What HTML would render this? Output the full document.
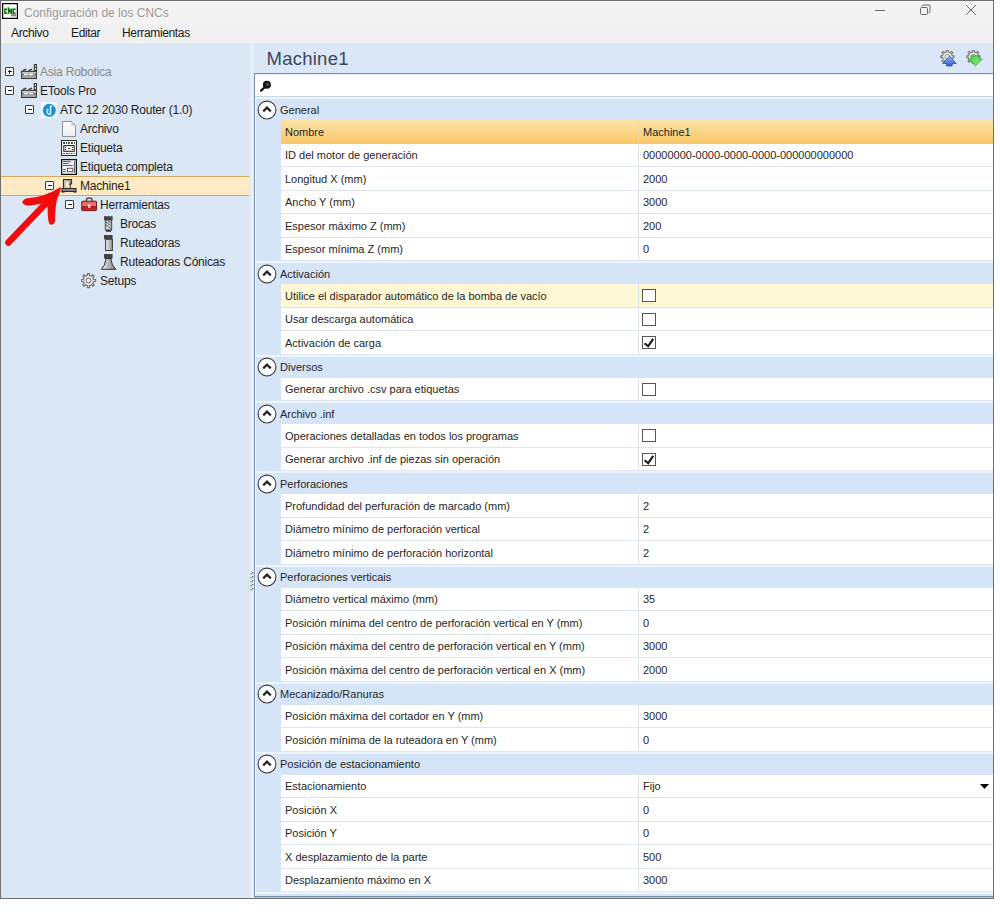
<!DOCTYPE html>
<html><head><meta charset="utf-8">
<style>
*{box-sizing:border-box}
html,body{margin:0;padding:0;width:1000px;height:915px;overflow:hidden;background:#fff;font-family:"Liberation Sans",sans-serif}
#win{position:absolute;left:0;top:0;width:994px;height:899px;border:1px solid #6f6f6f;background:#f0f0f0;overflow:hidden}
#title{position:absolute;left:0;top:0;width:992px;height:23px;background:#f3f3f3}
#title .t{position:absolute;left:23px;top:5px;font-size:12px;color:#9a9a9a;white-space:nowrap}
#menu{position:absolute;left:0;top:23px;width:992px;height:19px;background:#f0f0f0;font-size:12px;color:#1a1a1a;letter-spacing:-0.35px;box-shadow:inset 0 -1px 0 #f5f6f8}
#menu span{position:absolute;top:2px;white-space:nowrap}
#left{position:absolute;left:0;top:42px;width:249px;height:856px;background:#dce7f5}
#split{position:absolute;left:249px;top:42px;width:4px;height:856px;background:#e6edf8}
#right{position:absolute;left:253px;top:42px;width:739px;height:856px;background:#dbe7f6}
.eb{position:absolute;width:9px;height:9px;border:1px solid #333c48;background:#fff;border-radius:1px}
.eb .h{position:absolute;left:1.5px;top:3px;width:4px;height:1.2px;background:#222}
.eb .v{position:absolute;left:3px;top:1.5px;width:1.2px;height:4px;background:#222}
.ic{position:absolute;width:16px;height:16px}
.ic svg{display:block}
.tt{position:absolute;font-size:12px;line-height:18px;white-space:nowrap;letter-spacing:-0.2px}
#selrow{position:absolute;left:1px;top:176px;width:248px;height:20px;background:#fde9c4;border-top:1px solid #d8a85c;border-bottom:1px solid #d8a85c}
#grid{position:absolute;left:254px;top:73px;width:739px;height:824px;border:1px solid #7a8fa8;border-right:none;background:#d5e4f7;box-shadow:inset 1px 0 0 #eef6fd}
#search{position:absolute;left:255px;top:74px;width:738px;height:23px;background:#fff;border-bottom:1px solid #c9d6e6;box-shadow:inset 0 1px 0 #e4ebf6}
.gh{position:absolute;left:256px;width:737px;background:#d5e4f7}
.gh .ghb{position:absolute;left:0;right:0;top:0;height:2px;background:#ecf5fc}
.gh .circ{position:absolute;left:0.5px;top:2.6px;width:20px;height:20px}
.gh .circ svg{display:block}
.ght{position:absolute;left:24px;top:6.5px;font-size:11px;color:#262626;white-space:nowrap}
.row{position:absolute;left:281px;width:712px;background:#fff;border-bottom:1px solid #dfe5ee}
.row.sel{background:linear-gradient(#fde3a8,#f8c86a);border-bottom-color:#f8c86a}
.row.hov .nt{}
.row.hov::before{content:"";position:absolute;left:0;top:0;width:357px;bottom:0;background:#fef7d6}
.row.hov .vc{background:#fef7d6}
.nt{position:absolute;left:4px;top:5.6px;font-size:11px;color:#262626;white-space:nowrap}
.vc{position:absolute;left:357px;top:0;right:0;bottom:0;border-left:1px solid #dde4ee}
.row.sel .vc{border-left-color:#f4d7a0}
.vt{position:absolute;left:4px;top:5.6px;font-size:11px;color:#262626;white-space:nowrap}
.cb{position:absolute;left:3px;top:5px;width:14px;height:13px;border:1px solid #555;background:#fff}
.cb svg{position:absolute;left:-1px;top:-1px}
.dd{position:absolute;right:4px;top:9px}
#arrow{position:absolute;left:0;top:0}
</style></head><body>
<div id="win">
<div id="title">
 <svg style="position:absolute;left:1px;top:2px" width="16" height="16" viewBox="0 0 16 16"><rect x="0.6" y="0.6" width="14.8" height="14.8" fill="#fff" stroke="#000" stroke-width="1.25"/><rect x="2" y="3.5" width="12" height="7" fill="#e9f5e9"/><path d="M5.2 6.2 H2.9 V10.2 H5.2 M6.6 10.8 V5.8 L9.3 10.2 V5.6 M13.6 6.2 H11.2 V10.2 H13.6" fill="none" stroke="#0a700a" stroke-width="1.5"/><rect x="9" y="11.2" width="5" height="2.2" fill="#8a8a8a"/></svg>
 <span class="t">Configuración de los CNCs</span>
 <svg style="position:absolute;left:873px;top:3px" width="104" height="12" viewBox="0 0 104 12">
  <path d="M1 6.5 H11" stroke="#6a6a6a" stroke-width="1"/>
  <rect x="46.5" y="3.5" width="7" height="7" rx="1.2" fill="none" stroke="#6a6a6a" stroke-width="1"/>
  <path d="M48.5 2.5 V2 Q48.5 1 49.5 1 H55 Q56 1 56 2 V7.5 Q56 8.5 55 8.5 H54.5" fill="none" stroke="#6a6a6a" stroke-width="1"/>
  <path d="M92 1 L102 11 M102 1 L92 11" stroke="#6a6a6a" stroke-width="1"/>
 </svg>
</div>
<div id="menu"><span style="left:10px">Archivo</span><span style="left:70px">Editar</span><span style="left:121px">Herramientas</span></div>
<div id="left"></div>
<div id="split"></div>
<div id="right"></div>
</div>
<div id="selrow"></div>
<div class="eb" style="left:5px;top:67px"><span class="h"></span><span class="v"></span></div><div class="ic" style="left:21px;top:64px"><svg width="16" height="16" viewBox="0 0 16 16"><rect x="0.6" y="7.3" width="14.8" height="7.2" fill="#8d8d8d" stroke="#3a3a3a" stroke-width="1.1"/><rect x="1.2" y="8" width="13.6" height="1.6" fill="#c9c9c9"/><rect x="12.8" y="-0.2" width="3.2" height="7.8" fill="#3a3a3a"/><rect x="13.9" y="1.2" width="1.1" height="1.6" fill="#eee"/><rect x="13.9" y="4" width="1.1" height="2" fill="#eee"/><path d="M1.8 6.7 L5.2 5.1 M7.6 6.7 L11 5.1" stroke="#3a3a3a" stroke-width="1.3"/><rect x="3" y="9.8" width="3.8" height="1.4" fill="#fafafa"/><rect x="8" y="9.8" width="3.8" height="1.4" fill="#fafafa"/><rect x="1.2" y="11.8" width="13.6" height="2" fill="#a8a8a8"/></svg></div><div class="tt" style="left:40px;top:63px;color:#8a8a8a">Asia Robotica</div><div class="eb" style="left:5px;top:86px"><span class="h"></span></div><div class="ic" style="left:21px;top:83px"><svg width="16" height="16" viewBox="0 0 16 16"><rect x="0.6" y="7.3" width="14.8" height="7.2" fill="#8d8d8d" stroke="#3a3a3a" stroke-width="1.1"/><rect x="1.2" y="8" width="13.6" height="1.6" fill="#c9c9c9"/><rect x="12.8" y="-0.2" width="3.2" height="7.8" fill="#3a3a3a"/><rect x="13.9" y="1.2" width="1.1" height="1.6" fill="#eee"/><rect x="13.9" y="4" width="1.1" height="2" fill="#eee"/><path d="M1.8 6.7 L5.2 5.1 M7.6 6.7 L11 5.1" stroke="#3a3a3a" stroke-width="1.3"/><rect x="3" y="9.8" width="3.8" height="1.4" fill="#fafafa"/><rect x="8" y="9.8" width="3.8" height="1.4" fill="#fafafa"/><rect x="1.2" y="11.8" width="13.6" height="2" fill="#a8a8a8"/></svg></div><div class="tt" style="left:40px;top:82px;color:#1e1e1e">ETools Pro</div><div class="eb" style="left:25px;top:105px"><span class="h"></span></div><div class="ic" style="left:41px;top:102px"><svg width="16" height="16" viewBox="0 0 16 16"><rect width="16" height="16" fill="#eef7fc"/><circle cx="8.3" cy="8.3" r="6.5" fill="#1f8fcf"/><path d="M9.5 3.8 V12.2 H7.2 M9.5 4.2 H11.2 M7.3 7.2 Q5.5 8 6.5 9.5 Q6 11 7 12" fill="none" stroke="#c9f4ff" stroke-width="1.5"/></svg></div><div class="tt" style="left:60px;top:101px;color:#1e1e1e">ATC 12 2030 Router (1.0)</div><div class="ic" style="left:61px;top:121px"><svg width="16" height="16" viewBox="0 0 16 16"><defs><linearGradient id="dg" x1="0" y1="0" x2="0" y2="1"><stop offset="0" stop-color="#fff"/><stop offset="1" stop-color="#ececec"/></linearGradient></defs><path d="M1.5 0.5 H10.3 L14.5 4.7 V15.5 H1.5 Z" fill="url(#dg)" stroke="#8c9199" stroke-width="1"/><path d="M10.3 0.8 V4.7 H14.2 Z" fill="#c8c8c8"/></svg></div><div class="tt" style="left:80px;top:120px;color:#1e1e1e">Archivo</div><div class="ic" style="left:61px;top:140px"><svg width="16" height="16" viewBox="0 0 16 16"><rect x="0.5" y="0.5" width="15" height="15" fill="#fafafa" stroke="#2a2a2a" stroke-width="1.1"/><g fill="#1e1e1e"><rect x="2.2" y="2.1" width="1.8" height="1.8"/><rect x="5" y="2.1" width="1" height="1.8"/><rect x="7" y="2.1" width="1.7" height="1.8"/><rect x="10" y="2.1" width="1.8" height="1.8"/><rect x="13" y="2.1" width="0.9" height="1.8"/></g><rect x="2.8" y="5.6" width="10.4" height="5.7" fill="#fff" stroke="#2a2a2a" stroke-width="1.1"/><g fill="#333"><circle cx="4.6" cy="7.4" r="0.6"/><circle cx="4.6" cy="9.4" r="0.6"/><circle cx="11.4" cy="7.4" r="0.6"/><circle cx="11.4" cy="9.4" r="0.6"/><rect x="7" y="8.1" width="2" height="0.9"/></g><g fill="#6a3a3a"><rect x="2.2" y="13" width="1.8" height="1"/><rect x="5" y="13" width="1.8" height="1"/><rect x="7.6" y="13" width="1" height="1"/><rect x="9.6" y="13" width="1.8" height="1"/><rect x="12.6" y="13" width="1" height="1"/></g></svg></div><div class="tt" style="left:80px;top:139px;color:#1e1e1e">Etiqueta</div><div class="ic" style="left:61px;top:159px"><svg width="16" height="16" viewBox="0 0 16 16"><rect x="0.6" y="0.6" width="14.8" height="14.8" fill="#f3f6fa" stroke="#111" stroke-width="1.3"/><g fill="#5a5d63"><rect x="2" y="2.1" width="7.8" height="1"/><rect x="2" y="4" width="5.7" height="1"/><rect x="2" y="6" width="9.8" height="1"/><rect x="2" y="10" width="2.8" height="1"/><rect x="2" y="12" width="2.8" height="1"/><rect x="13" y="2" width="1" height="11.7"/></g><rect x="6.5" y="9.3" width="5.3" height="3.4" fill="#fff" stroke="#5a5d63" stroke-width="1"/></svg></div><div class="tt" style="left:80px;top:158px;color:#1e1e1e">Etiqueta completa</div><div class="eb" style="left:45px;top:181px"><span class="h"></span></div><div class="ic" style="left:61px;top:178px"><svg width="16" height="16" viewBox="0 0 16 16"><path d="M2.5 10.5 V1.5 H10.5 V6" fill="none" stroke="#2e2e2e" stroke-width="1.2"/><rect x="3.1" y="2.1" width="1.8" height="8.2" fill="#bdbdbd"/><rect x="5" y="2.1" width="5" height="1.4" fill="#9a9a9a"/><rect x="8" y="2.1" width="2" height="4" fill="#9a9a9a"/><rect x="7.7" y="5.6" width="3" height="0.9" fill="#2e2e2e"/><rect x="8.7" y="6" width="1" height="4" fill="#2e2e2e"/><rect x="1" y="10.5" width="14" height="3" fill="#8a8a8a" stroke="#2e2e2e" stroke-width="1.1"/><rect x="0.8" y="13" width="2.6" height="1.6" fill="#2e2e2e"/><rect x="12.6" y="13" width="2.6" height="1.6" fill="#2e2e2e"/></svg></div><div class="tt" style="left:80px;top:177px;color:#1e1e1e">Machine1</div><div class="eb" style="left:65px;top:200px"><span class="h"></span></div><div class="ic" style="left:81px;top:197px"><svg width="16" height="16" viewBox="0 0 16 16"><defs><linearGradient id="tg" x1="0" y1="0" x2="0" y2="1"><stop offset="0" stop-color="#e05a55"/><stop offset="0.45" stop-color="#f07a70"/><stop offset="0.55" stop-color="#b81818"/><stop offset="1" stop-color="#d02a2a"/></linearGradient></defs><path d="M5.5 4 V2.5 Q5.5 1.2 7 1.2 H9.5 Q11 1.2 11 2.5 V4" fill="none" stroke="#333" stroke-width="1.3"/><rect x="0.7" y="4.2" width="14.8" height="9.4" rx="0.8" fill="url(#tg)" stroke="#7a1a1a" stroke-width="1"/><rect x="7.2" y="7.5" width="2.2" height="3.2" fill="#fff2f2"/></svg></div><div class="tt" style="left:100px;top:196px;color:#1e1e1e">Herramientas</div><div class="ic" style="left:101px;top:216px"><svg width="16" height="16" viewBox="0 0 16 16"><rect x="3" y="0.2" width="8.6" height="3.9" fill="#454545"/><rect x="4.3" y="4" width="6.4" height="10" fill="#d0d0d0" stroke="#3a3a3a" stroke-width="0.9"/><path d="M4.6 5.5 L10.4 10 M4.6 8.5 L10.4 13 M6.5 4.2 L10.4 7.2" stroke="#555" stroke-width="0.9"/><rect x="5" y="14" width="5" height="1.8" fill="#3a3a3a"/></svg></div><div class="tt" style="left:120px;top:215px;color:#1e1e1e">Brocas</div><div class="ic" style="left:101px;top:235px"><svg width="16" height="16" viewBox="0 0 16 16"><rect x="3" y="0" width="8.6" height="4.3" fill="#454545"/><defs><linearGradient id="rg" x1="0" y1="0" x2="1" y2="0"><stop offset="0" stop-color="#f0f0f0"/><stop offset="1" stop-color="#909090"/></linearGradient></defs><rect x="4.6" y="4.3" width="6.8" height="11.2" fill="url(#rg)" stroke="#3a3a3a" stroke-width="1"/></svg></div><div class="tt" style="left:120px;top:234px;color:#1e1e1e">Ruteadoras</div><div class="ic" style="left:101px;top:254px"><svg width="16" height="16" viewBox="0 0 16 16"><rect x="3" y="0" width="8.6" height="4.5" fill="#454545"/><defs><linearGradient id="cg" x1="0" y1="0" x2="1" y2="0"><stop offset="0" stop-color="#f4f4f4"/><stop offset="1" stop-color="#7a7a7a"/></linearGradient></defs><path d="M4.6 4.5 H10.2 V6.5 Q10.5 11 14.8 15.3 H0.4 Q4.3 11 4.6 6.5 Z" fill="url(#cg)" stroke="#2e2e2e" stroke-width="1"/></svg></div><div class="tt" style="left:120px;top:253px;color:#1e1e1e">Ruteadoras Cónicas</div><div class="ic" style="left:81px;top:273px"><svg width="16" height="16" viewBox="0 0 16 16"><path d="M12.49 5.43 L12.82 6.55 L14.63 6.49 L14.63 8.51 L12.82 8.45 L12.49 9.57 L11.93 10.59 L13.26 11.82 L11.82 13.26 L10.59 11.93 L9.57 12.49 L8.45 12.82 L8.51 14.63 L6.49 14.63 L6.55 12.82 L5.43 12.49 L4.41 11.93 L3.18 13.26 L1.74 11.82 L3.07 10.59 L2.51 9.57 L2.18 8.45 L0.37 8.51 L0.37 6.49 L2.18 6.55 L2.51 5.43 L3.07 4.41 L1.74 3.18 L3.18 1.74 L4.41 3.07 L5.43 2.51 L6.55 2.18 L6.49 0.37 L8.51 0.37 L8.45 2.18 L9.57 2.51 L10.59 3.07 L11.82 1.74 L13.26 3.18 L11.93 4.41 Z" fill="#dadada" stroke="#6e6e6e" stroke-width="1.1" stroke-linejoin="round"/><circle cx="7.5" cy="7.5" r="2.3" fill="#f6f6f6" stroke="#707070" stroke-width="1"/></svg></div><div class="tt" style="left:100px;top:272px;color:#1e1e1e">Setups</div>
<div style="position:absolute;left:266.5px;top:48px;font-size:18.5px;color:#3b4756;white-space:nowrap;letter-spacing:0.25px">Machine1</div>
<svg style="position:absolute;left:940px;top:50px" width="17" height="17" viewBox="0 0 17 17"><defs><linearGradient id="bu" x1="0" y1="0" x2="0" y2="1"><stop offset="0" stop-color="#8fb8f8"/><stop offset="1" stop-color="#2d5fcf"/></linearGradient></defs><path d="M12.02 4.89 L12.32 5.92 L14.13 5.84 L14.13 7.76 L12.32 7.68 L12.02 8.71 L11.50 9.66 L12.84 10.88 L11.48 12.24 L10.26 10.90 L9.31 11.42 L8.28 11.72 L8.36 13.53 L6.44 13.53 L6.52 11.72 L5.49 11.42 L4.54 10.90 L3.32 12.24 L1.96 10.88 L3.30 9.66 L2.78 8.71 L2.48 7.68 L0.67 7.76 L0.67 5.84 L2.48 5.92 L2.78 4.89 L3.30 3.94 L1.96 2.72 L3.32 1.36 L4.54 2.70 L5.49 2.18 L6.52 1.88 L6.44 0.07 L8.36 0.07 L8.28 1.88 L9.31 2.18 L10.26 2.70 L11.48 1.36 L12.84 2.72 L11.50 3.94 Z" fill="#e2e2e2" stroke="#7a7a7a" stroke-width="1.1" stroke-linejoin="round"/><circle cx="7.4" cy="6.8" r="2.3" fill="#f0f0f0" stroke="#888" stroke-width="0.9"/><path d="M9.5 6 L16.2 13.5 H12.2 V16 H6.5 V13.5 H2.8 Z" fill="url(#bu)" stroke="#2447a8" stroke-width="0.7" stroke-linejoin="round"/></svg>
<svg style="position:absolute;left:966px;top:50px" width="17" height="17" viewBox="0 0 17 17"><defs><linearGradient id="gu" x1="0" y1="0" x2="1" y2="1"><stop offset="0" stop-color="#3fcf3f"/><stop offset="1" stop-color="#8cf08c"/></linearGradient></defs><path d="M12.02 4.89 L12.32 5.92 L14.13 5.84 L14.13 7.76 L12.32 7.68 L12.02 8.71 L11.50 9.66 L12.84 10.88 L11.48 12.24 L10.26 10.90 L9.31 11.42 L8.28 11.72 L8.36 13.53 L6.44 13.53 L6.52 11.72 L5.49 11.42 L4.54 10.90 L3.32 12.24 L1.96 10.88 L3.30 9.66 L2.78 8.71 L2.48 7.68 L0.67 7.76 L0.67 5.84 L2.48 5.92 L2.78 4.89 L3.30 3.94 L1.96 2.72 L3.32 1.36 L4.54 2.70 L5.49 2.18 L6.52 1.88 L6.44 0.07 L8.36 0.07 L8.28 1.88 L9.31 2.18 L10.26 2.70 L11.48 1.36 L12.84 2.72 L11.50 3.94 Z" fill="#e2e2e2" stroke="#7a7a7a" stroke-width="1.1" stroke-linejoin="round"/><circle cx="7.4" cy="6.8" r="2.3" fill="#f0f0f0" stroke="#888" stroke-width="0.9"/><path d="M5.2 5.8 H13 V9.2 H16.2 L9.5 15.8 L2.6 9.2 H5.2 Z" fill="url(#gu)" stroke="#2a9a2a" stroke-width="0.7" stroke-linejoin="round"/></svg>
<div id="grid"></div>
<svg style="position:absolute;left:249px;top:571px" width="6" height="22" viewBox="0 0 6 22"><g fill="#555"><rect x="1.6" y="2.2" width="1.2" height="1.2"/><rect x="3" y="1.0" width="1.2" height="1.2"/><rect x="1.6" y="6.2" width="1.2" height="1.2"/><rect x="3" y="5.0" width="1.2" height="1.2"/><rect x="1.6" y="10.2" width="1.2" height="1.2"/><rect x="3" y="9.0" width="1.2" height="1.2"/><rect x="1.6" y="14.2" width="1.2" height="1.2"/><rect x="3" y="13.0" width="1.2" height="1.2"/><rect x="1.6" y="18.2" width="1.2" height="1.2"/><rect x="3" y="17.0" width="1.2" height="1.2"/></g></svg>
<div id="search"><svg style="position:absolute;left:5px;top:6px" width="12" height="12" viewBox="0 0 12 12"><path d="M4.6 7.2 L1.1 10.6" stroke="#1a1208" stroke-width="2.3" stroke-linecap="round"/><circle cx="6.9" cy="4.8" r="4" fill="#151515"/><circle cx="7.6" cy="4.2" r="1.8" fill="#3a4a5a"/></svg></div>
<div class="gh" style="top:97.0px;height:23.0px"><div class="ghb"></div><div class="circ"><svg width="20" height="20" viewBox="0 0 20 20"><circle cx="10" cy="10" r="8.9" fill="#fff" stroke="#3a3a3a" stroke-width="1.05"/><path d="M6.2 11.4 L10 7.6 L13.8 11.4" fill="none" stroke="#262626" stroke-width="2.2"/></svg></div><span class="ght">General</span></div><div class="row sel" style="top:120.0px;height:23.5px"><span class="nt">Nombre</span><div class="vc"><span class="vt">Machine1</span></div></div><div class="row" style="top:143.5px;height:23.5px"><span class="nt">ID del motor de generación</span><div class="vc"><span class="vt">00000000-0000-0000-0000-000000000000</span></div></div><div class="row" style="top:167.0px;height:23.5px"><span class="nt">Longitud X (mm)</span><div class="vc"><span class="vt">2000</span></div></div><div class="row" style="top:190.5px;height:23.5px"><span class="nt">Ancho Y (mm)</span><div class="vc"><span class="vt">3000</span></div></div><div class="row" style="top:214.0px;height:23.5px"><span class="nt">Espesor máximo Z (mm)</span><div class="vc"><span class="vt">200</span></div></div><div class="row" style="top:237.5px;height:23.5px"><span class="nt">Espesor mínima Z (mm)</span><div class="vc"><span class="vt">0</span></div></div><div class="gh" style="top:261.0px;height:23.0px"><div class="ghb"></div><div class="circ"><svg width="20" height="20" viewBox="0 0 20 20"><circle cx="10" cy="10" r="8.9" fill="#fff" stroke="#3a3a3a" stroke-width="1.05"/><path d="M6.2 11.4 L10 7.6 L13.8 11.4" fill="none" stroke="#262626" stroke-width="2.2"/></svg></div><span class="ght">Activación</span></div><div class="row hov" style="top:284.0px;height:23.5px"><span class="nt">Utilice el disparador automático de la bomba de vacío</span><div class="vc"><span class="cb"></span></div></div><div class="row" style="top:307.5px;height:23.5px"><span class="nt">Usar descarga automática</span><div class="vc"><span class="cb"></span></div></div><div class="row" style="top:331.0px;height:23.5px"><span class="nt">Activación de carga</span><div class="vc"><span class="cb"><svg width="14" height="13" viewBox="0 0 14 13"><path d="M2.6 7.2 L6.2 10.2 L11.2 2.9" fill="none" stroke="#1a1a1a" stroke-width="2.1"/></svg></span></div></div><div class="gh" style="top:354.5px;height:23.0px"><div class="ghb"></div><div class="circ"><svg width="20" height="20" viewBox="0 0 20 20"><circle cx="10" cy="10" r="8.9" fill="#fff" stroke="#3a3a3a" stroke-width="1.05"/><path d="M6.2 11.4 L10 7.6 L13.8 11.4" fill="none" stroke="#262626" stroke-width="2.2"/></svg></div><span class="ght">Diversos</span></div><div class="row" style="top:377.5px;height:23.5px"><span class="nt">Generar archivo .csv para etiquetas</span><div class="vc"><span class="cb"></span></div></div><div class="gh" style="top:401.0px;height:23.0px"><div class="ghb"></div><div class="circ"><svg width="20" height="20" viewBox="0 0 20 20"><circle cx="10" cy="10" r="8.9" fill="#fff" stroke="#3a3a3a" stroke-width="1.05"/><path d="M6.2 11.4 L10 7.6 L13.8 11.4" fill="none" stroke="#262626" stroke-width="2.2"/></svg></div><span class="ght">Archivo .inf</span></div><div class="row" style="top:424.0px;height:23.5px"><span class="nt">Operaciones detalladas en todos los programas</span><div class="vc"><span class="cb"></span></div></div><div class="row" style="top:447.5px;height:23.5px"><span class="nt">Generar archivo .inf de piezas sin operación</span><div class="vc"><span class="cb"><svg width="14" height="13" viewBox="0 0 14 13"><path d="M2.6 7.2 L6.2 10.2 L11.2 2.9" fill="none" stroke="#1a1a1a" stroke-width="2.1"/></svg></span></div></div><div class="gh" style="top:471.0px;height:23.0px"><div class="ghb"></div><div class="circ"><svg width="20" height="20" viewBox="0 0 20 20"><circle cx="10" cy="10" r="8.9" fill="#fff" stroke="#3a3a3a" stroke-width="1.05"/><path d="M6.2 11.4 L10 7.6 L13.8 11.4" fill="none" stroke="#262626" stroke-width="2.2"/></svg></div><span class="ght">Perforaciones</span></div><div class="row" style="top:494.0px;height:23.5px"><span class="nt">Profundidad del perfuración de marcado (mm)</span><div class="vc"><span class="vt">2</span></div></div><div class="row" style="top:517.5px;height:23.5px"><span class="nt">Diámetro mínimo de perforación vertical</span><div class="vc"><span class="vt">2</span></div></div><div class="row" style="top:541.0px;height:23.5px"><span class="nt">Diámetro mínimo de perforación horizontal</span><div class="vc"><span class="vt">2</span></div></div><div class="gh" style="top:564.5px;height:23.0px"><div class="ghb"></div><div class="circ"><svg width="20" height="20" viewBox="0 0 20 20"><circle cx="10" cy="10" r="8.9" fill="#fff" stroke="#3a3a3a" stroke-width="1.05"/><path d="M6.2 11.4 L10 7.6 L13.8 11.4" fill="none" stroke="#262626" stroke-width="2.2"/></svg></div><span class="ght">Perforaciones verticais</span></div><div class="row" style="top:587.5px;height:23.5px"><span class="nt">Diámetro vertical máximo (mm)</span><div class="vc"><span class="vt">35</span></div></div><div class="row" style="top:611.0px;height:23.5px"><span class="nt">Posición mínima del centro de perforación vertical en Y (mm)</span><div class="vc"><span class="vt">0</span></div></div><div class="row" style="top:634.5px;height:23.5px"><span class="nt">Posición máxima del centro de perforación vertical en Y (mm)</span><div class="vc"><span class="vt">3000</span></div></div><div class="row" style="top:658.0px;height:23.5px"><span class="nt">Posición máxima del centro de perforación vertical en X (mm)</span><div class="vc"><span class="vt">2000</span></div></div><div class="gh" style="top:681.5px;height:23.0px"><div class="ghb"></div><div class="circ"><svg width="20" height="20" viewBox="0 0 20 20"><circle cx="10" cy="10" r="8.9" fill="#fff" stroke="#3a3a3a" stroke-width="1.05"/><path d="M6.2 11.4 L10 7.6 L13.8 11.4" fill="none" stroke="#262626" stroke-width="2.2"/></svg></div><span class="ght">Mecanizado/Ranuras</span></div><div class="row" style="top:704.5px;height:23.5px"><span class="nt">Posición máxima del cortador en Y (mm)</span><div class="vc"><span class="vt">3000</span></div></div><div class="row" style="top:728.0px;height:23.5px"><span class="nt">Posición mínima de la ruteadora en Y (mm)</span><div class="vc"><span class="vt">0</span></div></div><div class="gh" style="top:751.5px;height:23.0px"><div class="ghb"></div><div class="circ"><svg width="20" height="20" viewBox="0 0 20 20"><circle cx="10" cy="10" r="8.9" fill="#fff" stroke="#3a3a3a" stroke-width="1.05"/><path d="M6.2 11.4 L10 7.6 L13.8 11.4" fill="none" stroke="#262626" stroke-width="2.2"/></svg></div><span class="ght">Posición de estacionamiento</span></div><div class="row" style="top:774.5px;height:23.5px"><span class="nt">Estacionamiento</span><div class="vc"><span class="vt">Fijo</span><svg class="dd" width="9" height="5" viewBox="0 0 9 5"><path d="M0 0 L9 0 L4.5 5 Z" fill="#000"/></svg></div></div><div class="row" style="top:798.0px;height:23.5px"><span class="nt">Posición X</span><div class="vc"><span class="vt">0</span></div></div><div class="row" style="top:821.5px;height:23.5px"><span class="nt">Posición Y</span><div class="vc"><span class="vt">0</span></div></div><div class="row" style="top:845.0px;height:23.5px"><span class="nt">X desplazamiento de la parte</span><div class="vc"><span class="vt">500</span></div></div><div class="row" style="top:868.5px;height:23.5px"><span class="nt">Desplazamiento máximo en X</span><div class="vc"><span class="vt">3000</span></div></div>
<div style="position:absolute;left:256px;top:892px;width:737px;height:2px;background:#ecf5fc"></div>
<div style="position:absolute;left:254px;top:897px;width:739px;height:1px;background:#afc4e0"></div>
<svg id="arrow" width="80" height="260" viewBox="0 0 80 260">
 <path d="M8.4 242.6 L50 199" stroke="#f20c0c" stroke-width="6.5" stroke-linecap="round" fill="none"/>
 <path d="M26 198.6 Q44 197.5 60.7 187 Q61.5 190 57.5 198 Q54.8 207 55.2 221.5 Q53 226.5 49.2 223.8 Q47.5 219 47.6 207 L44 203.2 Q35 205 27.8 205.8 Q21.5 204.5 22.5 201.5 Q23.5 199.6 26 198.6 Z" fill="#f20c0c"/>
</svg>
</body></html>
